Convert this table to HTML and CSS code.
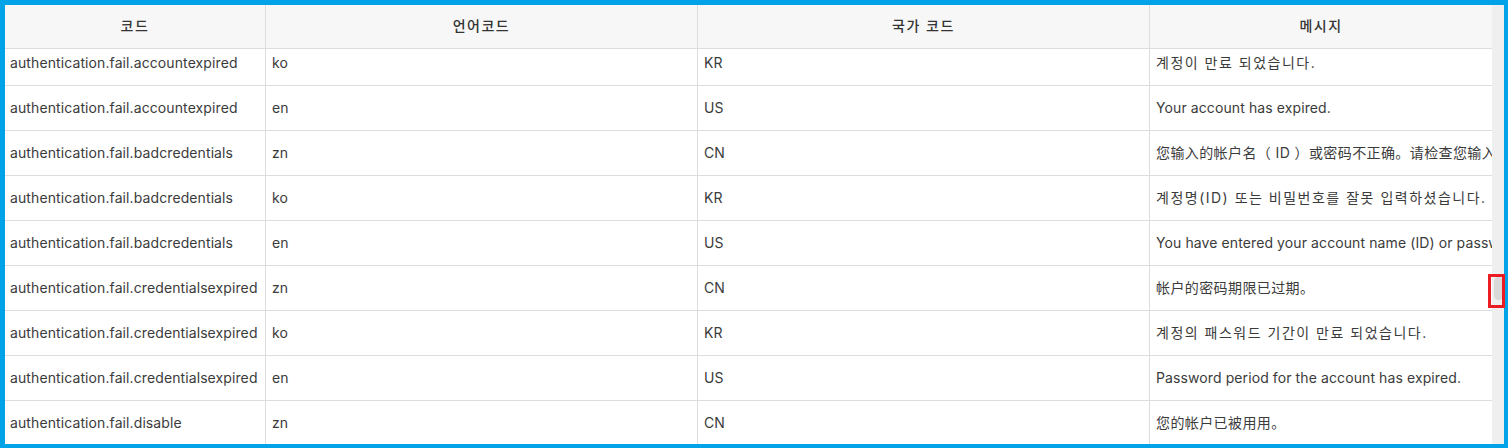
FILE: index.html
```html
<!DOCTYPE html>
<html lang="ko">
<head>
<meta charset="utf-8">
<title>메시지 코드</title>
<link rel="stylesheet" href="styles.css">
</head>
<body>
<div class="frame">
  <div class="table">
    <div class="row head">
      <div class="cell ko">코드</div>
      <div class="cell ko">언어코드</div>
      <div class="cell ko">국가 코드</div>
      <div class="cell ko">메시지</div>
    </div>
    <div class="body">
      <div class="rows">
        <div class="row">
          <div class="cell">authentication.fail.accountexpired</div><div class="cell">ko</div><div class="cell">KR</div><div class="cell ko">계정이 만료 되었습니다.</div>
        </div>
        <div class="row">
          <div class="cell">authentication.fail.accountexpired</div><div class="cell">en</div><div class="cell">US</div><div class="cell">Your account has expired.</div>
        </div>
        <div class="row">
          <div class="cell">authentication.fail.badcredentials</div><div class="cell">zn</div><div class="cell">CN</div><div class="cell zh" lang="zh-CN">您输入的帐户名（ ID ）或密码不正确。请检查您输入的帐户名和密码。</div>
        </div>
        <div class="row">
          <div class="cell">authentication.fail.badcredentials</div><div class="cell">ko</div><div class="cell">KR</div><div class="cell ko">계정명(ID) 또는 비밀번호를 잘못 입력하셨습니다. 입력하신 내용을 다시 확인해주세요.</div>
        </div>
        <div class="row">
          <div class="cell">authentication.fail.badcredentials</div><div class="cell">en</div><div class="cell">US</div><div class="cell">You have entered your account name (ID) or password incorrectly.</div>
        </div>
        <div class="row">
          <div class="cell">authentication.fail.credentialsexpired</div><div class="cell">zn</div><div class="cell">CN</div><div class="cell zh" lang="zh-CN">帐户的密码期限已过期。</div>
        </div>
        <div class="row">
          <div class="cell">authentication.fail.credentialsexpired</div><div class="cell">ko</div><div class="cell">KR</div><div class="cell ko">계정의 패스워드 기간이 만료 되었습니다.</div>
        </div>
        <div class="row">
          <div class="cell">authentication.fail.credentialsexpired</div><div class="cell">en</div><div class="cell">US</div><div class="cell">Password period for the account has expired.</div>
        </div>
        <div class="row">
          <div class="cell">authentication.fail.disable</div><div class="cell">zn</div><div class="cell">CN</div><div class="cell zh" lang="zh-CN">您的帐户已被用用。</div>
        </div>
      </div>
    </div>
  </div>
  <div class="scrollbar">
    <div class="thumb"></div>
    <div class="mark"></div>
  </div>
</div>
</body>
</html>
```

FILE: styles.css
```css
html, body {
  margin: 0;
  padding: 0;
}
body {
  width: 1508px;
  height: 448px;
  overflow: hidden;
  background: #ffffff;
  font-family: Inter, "Noto Sans CJK KR", "Noto Sans CJK SC", sans-serif;
  font-size: 14px;
  letter-spacing: 0.1px;
  color: #3b3b3b;
}
.frame {
  box-sizing: border-box;
  width: 1508px;
  height: 448px;
  border-style: solid;
  border-color: #00a3e8;
  border-width: 5px 4px 4px 5px;
  display: flex;
  position: relative;
}
.table {
  width: 1487px;
  display: flex;
  flex-direction: column;
  overflow: hidden;
}
.row {
  display: grid;
  grid-template-columns: 261px 432px 452px 342px;
  height: 45px;
  box-sizing: border-box;
  border-bottom: 1px solid #dddddd;
  flex-shrink: 0;
}
.cell {
  box-sizing: border-box;
  border-right: 1px solid #dddddd;
  padding: 0 0 2px 6px;
  display: flex;
  align-items: center;
  white-space: nowrap;
  overflow: hidden;
}
.row .cell:first-child {
  padding-left: 5px;
}
.row .cell:last-child {
  border-right: none;
}
.head {
  height: 44px;
  background: #f7f7f7;
  color: #333333;
  font-weight: 500;
}
.head .cell,
.head .cell:first-child {
  justify-content: center;
  padding: 0 0 3px 0;
}
.body {
  flex: 1;
  overflow: hidden;
}
.rows {
  margin-top: -8px;
}
.ko {
  font-family: Inter, "Noto Sans CJK KR", sans-serif;
  letter-spacing: 1.5px;
}
.zh {
  font-family: Inter, "Noto Sans CJK SC", sans-serif;
  letter-spacing: 0.4px;
}
.scrollbar {
  width: 12px;
  background: #efefef;
  position: relative;
  padding-top: 272px;
  box-sizing: border-box;
}
.thumb {
  width: 9px;
  height: 23px;
  margin-left: 2px;
  background: #d9d9d9;
  border-radius: 5px;
}
.mark {
  position: absolute;
  left: -4px;
  top: 269px;
  width: 17px;
  height: 34px;
  box-sizing: border-box;
  border: 3px solid #ec1c24;
}
```
